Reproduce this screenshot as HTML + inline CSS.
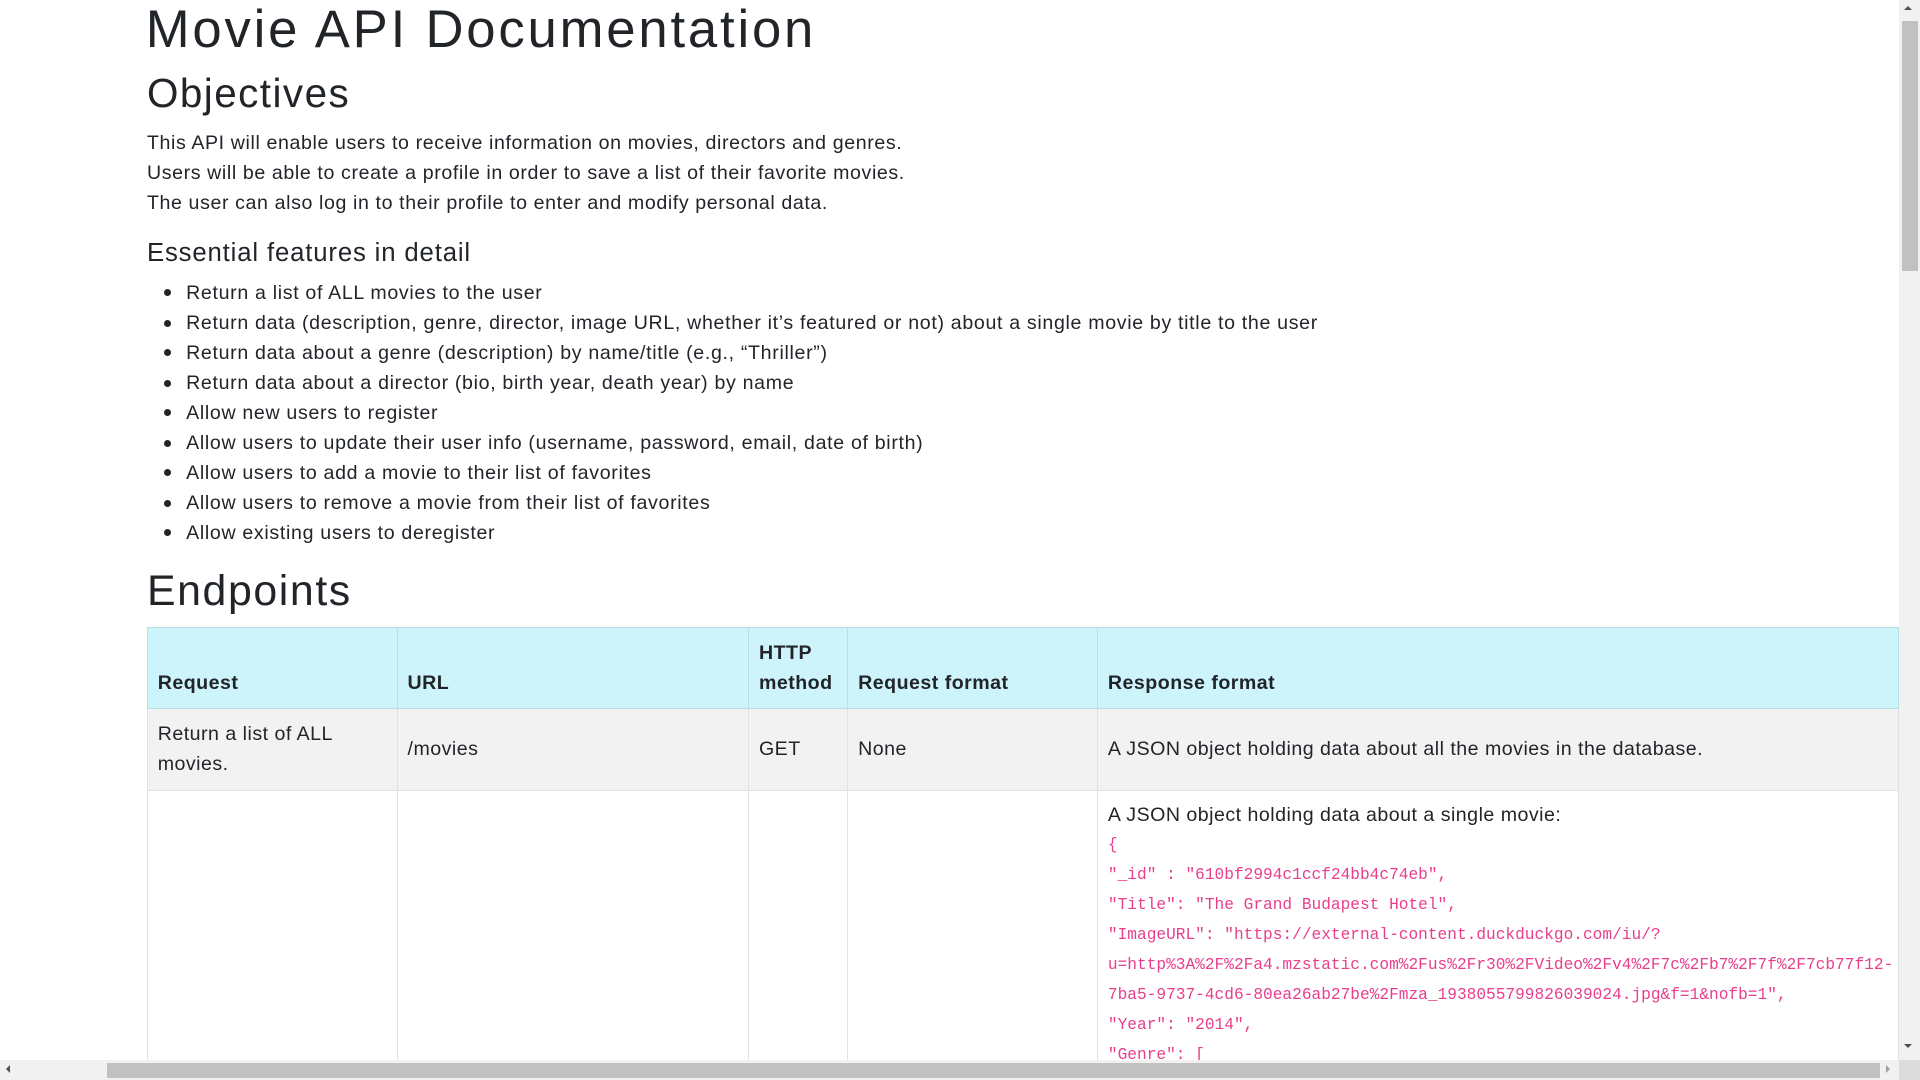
<!DOCTYPE html>
<html><head><meta charset="utf-8"><style>
html{zoom:1.2245;overflow:hidden;height:882px}
body{margin:0;width:1568px;height:882px;overflow:hidden;position:relative;background:#fff;color:#212529;font-family:"Liberation Sans",sans-serif}
.a{position:absolute;white-space:nowrap}
.t{font-size:16px;letter-spacing:0.5px}
h1,h2,h3{margin:0;font-weight:400;position:absolute;white-space:nowrap}
table{position:absolute;left:120px;top:512px;width:1431px;border-collapse:collapse;table-layout:fixed;font-size:16px;letter-spacing:0.4px}
th,td{border:1px solid #dee2e6;padding:8px 8px;text-align:left;vertical-align:bottom;line-height:24.5px}
th{background:#cdf3fb;border-color:#b8dfe7;font-weight:700;height:49px}
td{vertical-align:middle}
code{font-family:"Liberation Mono",monospace;color:#e83e8c;font-size:13.2px;display:block;line-height:24.5px;white-space:pre;letter-spacing:0}
li{position:absolute;left:152px;font-size:16px;white-space:nowrap;list-style:none;letter-spacing:0.55px}
.d{position:absolute;left:-18px;top:6px;width:6px;height:6px;border-radius:3px;background:#212529}
.wrap{position:absolute;left:0;top:0;width:1551px;height:866px;overflow:hidden}
</style></head><body>
<div class="wrap">
<h1 style="left:119px;top:-1px;font-size:43px;letter-spacing:2.3px">Movie API Documentation</h1>
<h2 style="left:120px;top:57px;font-size:33px;letter-spacing:1.2px">Objectives</h2>
<div class="a t" style="left:120px;top:108px">This API will enable users to receive information on movies, directors and genres.</div>
<div class="a t" style="left:120px;top:132px">Users will be able to create a profile in order to save a list of their favorite movies.</div>
<div class="a t" style="left:120px;top:157px">The user can also log in to their profile to enter and modify personal data.</div>
<h3 style="left:120px;top:195px;font-size:21px;letter-spacing:0.7px">Essential features in detail</h3>
<ul style="margin:0;padding:0">
<li style="top:230px"><i class="d"></i>Return a list of ALL movies to the user</li>
<li style="top:255px"><i class="d"></i>Return data (description, genre, director, image URL, whether it’s featured or not) about a single movie by title to the user</li>
<li style="top:279px"><i class="d"></i>Return data about a genre (description) by name/title (e.g., “Thriller”)</li>
<li style="top:304px"><i class="d"></i>Return data about a director (bio, birth year, death year) by name</li>
<li style="top:328px"><i class="d"></i>Allow new users to register</li>
<li style="top:353px"><i class="d"></i>Allow users to update their user info (username, password, email, date of birth)</li>
<li style="top:377px"><i class="d"></i>Allow users to add a movie to their list of favorites</li>
<li style="top:402px"><i class="d"></i>Allow users to remove a movie from their list of favorites</li>
<li style="top:426px"><i class="d"></i>Allow existing users to deregister</li>
</ul>
<h2 style="left:120px;top:463px;font-size:35px;letter-spacing:1.3px">Endpoints</h2>
<table>
<colgroup><col style="width:204px"><col style="width:287px"><col style="width:81px"><col style="width:204px"><col></colgroup>
<tr><th>Request</th><th>URL</th><th>HTTP method</th><th>Request format</th><th>Response format</th></tr>
<tr style="background:#f2f2f2;height:67px"><td>Return a list of ALL movies.</td><td>/movies</td><td>GET</td><td>None</td><td>A JSON object holding data about all the movies in the database.</td></tr>
<tr style="height:260px"><td></td><td></td><td></td><td></td><td style="vertical-align:top;padding-top:8px">A JSON object holding data about a single movie:<code>{
"_id" : "610bf2994c1ccf24bb4c74eb",
"Title": "The Grand Budapest Hotel",
"ImageURL": "https://external-content.duckduckgo.com/iu/?
u=http%3A%2F%2Fa4.mzstatic.com%2Fus%2Fr30%2FVideo%2Fv4%2F7c%2Fb7%2F7f%2F7cb77f12-
7ba5-9737-4cd6-80ea26ab27be%2Fmza_1938055799826039024.jpg&amp;f=1&amp;nofb=1",
"Year": "2014",
"Genre": [</code></td></tr>
</table>
</div>
<div class="a" style="left:1551px;top:0;width:17px;height:866px;background:#f1f1f1"></div>
<div class="a" style="left:1553px;top:17px;width:13px;height:204px;background:#c1c1c1"></div>
<div class="a" style="left:0;top:866px;width:1551px;height:16px;background:#f1f1f1"></div>
<div class="a" style="left:87px;top:868px;width:1448px;height:12px;background:#c1c1c1"></div>
<div class="a" style="left:1551px;top:866px;width:17px;height:16px;background:#dcdcdc"></div>
<div class="a" style="left:1555px;top:5px;width:0;height:0;border:4px solid transparent;border-bottom-color:#505050;border-top:0"></div>
<div class="a" style="left:1555px;top:853px;width:0;height:0;border:4px solid transparent;border-top-color:#505050;border-bottom:0"></div>
<div class="a" style="left:5px;top:870px;width:0;height:0;border:4px solid transparent;border-right-color:#505050;border-left:0"></div>
<div class="a" style="left:1540px;top:870px;width:0;height:0;border:4px solid transparent;border-left-color:#a0a0a0;border-right:0"></div>
</body></html>
